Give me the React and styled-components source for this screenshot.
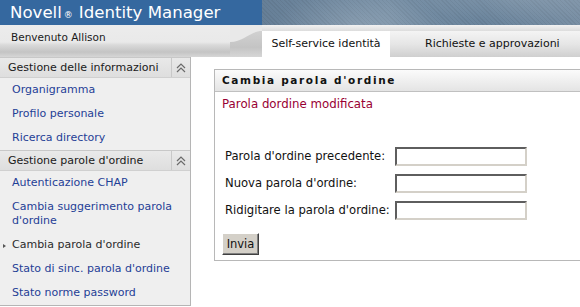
import { Fragment } from "react";
import styled, { createGlobalStyle } from "styled-components";

const GlobalStyle = createGlobalStyle`
  html, body {
    margin: 0;
    padding: 0;
    background: #ffffff;
    overflow: hidden;
  }
  body {
    font-family: "DejaVu Sans", "Liberation Sans", sans-serif;
    color: #111;
  }
`;

const Page = styled.div`
  width: 580px;
  height: 307px;
  display: flex;
  flex-direction: column;
  overflow: hidden;
`;

const Banner = styled.header`
  display: flex;
  height: 25px;
`;

const BannerTitle = styled.div`
  flex: 0 0 252px;
  padding-left: 10px;
  background: #35689f;
  color: #ffffff;
  font-size: 16.6px;
  line-height: 25px;
  white-space: nowrap;
`;

const Reg = styled.span`
  font-size: 9px;
  margin: 0 6px 0 2px;
`;

const BannerArt = styled.div`
  flex: 1;
  background:
    radial-gradient(ellipse 120px 60px at 30% 120%, rgba(255, 255, 255, 0.16), transparent 70%),
    radial-gradient(ellipse 160px 40px at 80% -20%, rgba(255, 255, 255, 0.14), transparent 70%),
    repeating-linear-gradient(45deg, rgba(0, 0, 0, 0.05) 0 1px, transparent 1px 3px),
    linear-gradient(90deg, #667f97 0%, #7890a6 40%, #6a849c 70%, #7a90a5 100%);
`;

const TopBar = styled.div`
  display: flex;
  height: 32px;
`;

const Welcome = styled.div`
  flex: 0 0 219px;
  padding-left: 11px;
  font-size: 10.5px;
  line-height: 25px;
  color: #1a1a1a;
  background: linear-gradient(
    180deg,
    #ececec 0px,
    #e9e9e9 17px,
    #d9d9d9 20px,
    #c4c4c4 27px,
    #d6d6d6 32px
  );
`;

const Swoosh = styled.svg`
  flex: 0 0 32px;
  display: block;
`;

const Tabs = styled.nav`
  flex: 1;
  display: flex;
  align-items: flex-end;
  background: linear-gradient(180deg, #f2f2f2 0, #dddddd 6px);
`;

const Tab = styled.div`
  height: 26px;
  line-height: 26px;
  font-size: 11px;
  color: #111;
  white-space: nowrap;
  flex: ${(p) => (p.$active ? "0 0 128px" : "1")};
  text-align: ${(p) => (p.$active ? "center" : "left")};
  padding-left: ${(p) => (p.$active ? "0" : "35px")};
  background: ${(p) =>
    p.$active
      ? "#ffffff"
      : "linear-gradient(180deg, #f4f4f4 0%, #e6e6e6 50%, #cfcfcf 100%)"};
`;

const Content = styled.div`
  flex: 1;
  display: flex;
  align-items: flex-start;
`;

const Sidebar = styled.aside`
  flex: 0 0 190px;
  background: #efefef;
  border-right: 1px solid #b5b5b5;
  border-bottom: 1px solid #b5b5b5;
`;

const SectionHeader = styled.div`
  display: flex;
  height: 19px;
  border-top: 1px solid #c8c8c8;
  border-bottom: 1px solid #d0d0d0;
  background: linear-gradient(180deg, #e9e9e9 0%, #dedede 100%);
  font-size: 11px;
  color: #1a1a1a;
`;

const SectionTitle = styled.span`
  flex: 1;
  padding-left: 8px;
  line-height: 19px;
  white-space: nowrap;
`;

const Collapse = styled.span`
  flex: 0 0 18px;
  border-left: 1px solid #c8c8c8;
  display: flex;
  align-items: center;
  justify-content: center;
`;

const Item = styled.div`
  position: relative;
  padding: 5px 8px 5px 12px;
  font-size: 11px;
  line-height: 14px;
  color: ${(p) => (p.$current ? "#2b2b2b" : "#1f4096")};

  &::before {
    content: "";
    display: ${(p) => (p.$current ? "block" : "none")};
    position: absolute;
    left: 3px;
    top: 11px;
    border-left: 3px solid #555;
    border-top: 2px solid transparent;
    border-bottom: 2px solid transparent;
  }
`;

const Main = styled.main`
  flex: 1;
  padding: 12px 0 0 23px;
  overflow: hidden;
`;

const Panel = styled.section`
  width: 400px;
  border: 1px solid #b8b8b8;
`;

const PanelHeader = styled.h2`
  margin: 0;
  height: 21px;
  line-height: 21px;
  padding-left: 7px;
  border-bottom: 1px solid #c0c0c0;
  background: linear-gradient(180deg, #fbfbfb 0%, #e4e4e4 100%);
  font-size: 10.5px;
  font-weight: bold;
  letter-spacing: 1.65px;
  color: #111;
`;

const PanelBody = styled.div`
  padding: 4px 7px 5px;
`;

const Message = styled.div`
  font-size: 11.8px;
  line-height: 16px;
  color: #990033;
`;

const Form = styled.form`
  margin-top: 35px;
  display: grid;
  grid-template-columns: max-content 132px;
  column-gap: 5px;
  row-gap: 8px;
`;

const Label = styled.label`
  padding-left: 3px;
  font-size: 11.6px;
  line-height: 19px;
  color: #111;
  white-space: nowrap;
`;

const Field = styled.input`
  box-sizing: border-box;
  width: 132px;
  height: 19px;
  margin: 0;
  padding: 0 2px;
  border: 2px solid;
  border-color: #5e5e5e #d4d0c8 #d4d0c8 #5e5e5e;
  background: #fff;
  outline: none;
`;

const Button = styled.button`
  display: block;
  margin-top: 13px;
  height: 22px;
  width: 37px;
  padding: 0;
  font-family: inherit;
  font-size: 11.5px;
  color: #111;
  background: #d4d0c8;
  border: 1px solid;
  border-color: #ffffff #404040 #404040 #ffffff;
  box-shadow: inset -1px -1px 0 #808080;
`;

function Chevrons() {
  return (
    <svg width="10" height="10" viewBox="0 0 10 10">
      <polyline points="1,5 5,1 9,5" fill="none" stroke="#6a6a6a" strokeWidth="1.2" />
      <polyline points="1,9 5,5 9,9" fill="none" stroke="#6a6a6a" strokeWidth="1.2" />
    </svg>
  );
}

const sections = [
  {
    title: "Gestione delle informazioni",
    items: ["Organigramma", "Profilo personale", "Ricerca directory"],
  },
  {
    title: "Gestione parole d'ordine",
    items: [
      "Autenticazione CHAP",
      "Cambia suggerimento parola d'ordine",
      "Cambia parola d'ordine",
      "Stato di sinc. parola d'ordine",
      "Stato norme password",
    ],
  },
];

const fields = [
  "Parola d'ordine precedente:",
  "Nuova parola d'ordine:",
  "Ridigitare la parola d'ordine:",
];

function App() {
  return (
    <>
      <GlobalStyle />
      <Page>
        <Banner>
          <BannerTitle>
            Novell<Reg>®</Reg>Identity Manager
          </BannerTitle>
          <BannerArt />
        </Banner>
        <TopBar>
          <Welcome>Benvenuto Allison</Welcome>
          <Swoosh width="32" height="32" viewBox="0 0 32 32">
            <defs>
              <linearGradient id="shelf" x1="0" y1="0" x2="0" y2="1">
                <stop offset="0" stopColor="#d6d6d6" />
                <stop offset="0.7" stopColor="#c4c4c4" />
                <stop offset="1" stopColor="#d6d6d6" />
              </linearGradient>
            </defs>
            <rect width="32" height="32" fill="url(#shelf)" />
            <path d="M0,0 H32 V6 C20,6 14,17 0,17 Z" fill="#e9e9e9" />
          </Swoosh>
          <Tabs>
            <Tab $active>Self-service identità</Tab>
            <Tab>Richieste e approvazioni</Tab>
          </Tabs>
        </TopBar>
        <Content>
          <Sidebar>
            {sections.map((s) => (
              <div key={s.title}>
                <SectionHeader>
                  <SectionTitle>{s.title}</SectionTitle>
                  <Collapse>
                    <Chevrons />
                  </Collapse>
                </SectionHeader>
                {s.items.map((it) => (
                  <Item key={it} $current={it === "Cambia parola d'ordine"}>
                    {it}
                  </Item>
                ))}
              </div>
            ))}
          </Sidebar>
          <Main>
            <Panel>
              <PanelHeader>Cambia parola d'ordine</PanelHeader>
              <PanelBody>
                <Message>Parola dordine modificata</Message>
                <Form onSubmit={(e) => e.preventDefault()}>
                  {fields.map((f) => (
                    <Fragment key={f}>
                      <Label>{f}</Label>
                      <Field type="password" />
                    </Fragment>
                  ))}
                </Form>
                <Button type="button">Invia</Button>
              </PanelBody>
            </Panel>
          </Main>
        </Content>
      </Page>
    </>
  );
}

export default App;
